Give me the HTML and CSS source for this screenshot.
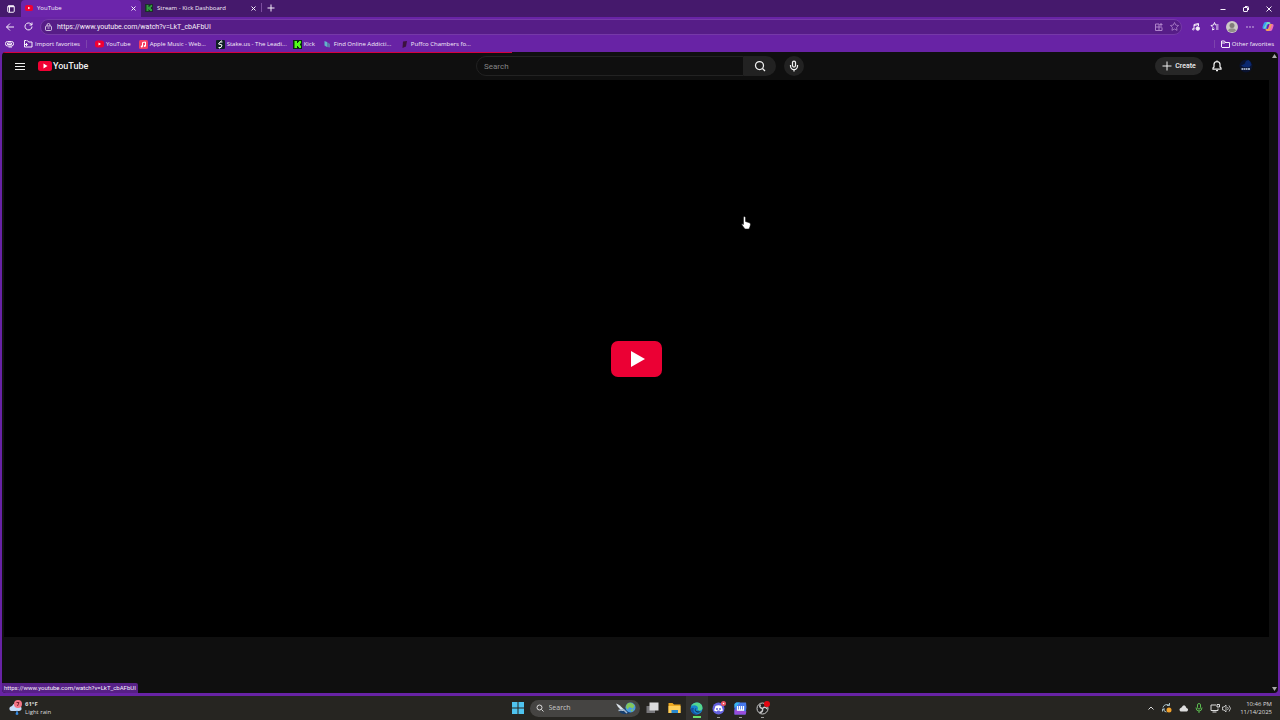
FILE: index.html
```html
<!DOCTYPE html>
<html lang="en">
<head>
  <meta charset="UTF-8">
  <meta name="viewport" content="width=device-width, initial-scale=1.0">
  <title>YouTube</title>
  <link rel="stylesheet" href="styles.css">
</head>
<body>
  <div class="browser">
    <div class="tab-strip">
      <button class="tab-menu" aria-label="Tab actions">
        <svg width="8" height="8" viewBox="0 0 16 16" fill="none" stroke="currentColor" stroke-width="2"><rect x="1.5" y="1.5" width="13" height="13" rx="2"/><path d="M2 3h12" stroke-width="3"/><path d="M5 4v10"/></svg>
      </button>
      <div class="tab active">
        <svg width="8" height="8" viewBox="0 0 18 16"><rect x="0" y="1" width="18" height="14" rx="5" fill="#f00033"/><path d="M7 5l5 3-5 3z" fill="#fff"/></svg>
        <span>YouTube</span>
        <button aria-label="Close tab"><svg width="5" height="5" viewBox="0 0 10 10" stroke="currentColor" stroke-width="2"><path d="M1 1l8 8M9 1l-8 8"/></svg></button>
      </div>
      <div class="tab">
        <svg width="8" height="8" viewBox="0 0 16 16"><rect width="16" height="16" fill="#1e2f2c"/><path d="M3 2h4v4h2V4h2V2h3v4h-2v4h2v4h-4v-2H8v-2H7v4H3z" fill="#2f9d3c"/></svg>
        <span>Stream - Kick Dashboard</span>
        <button aria-label="Close tab"><svg width="5" height="5" viewBox="0 0 10 10" stroke="currentColor" stroke-width="2"><path d="M1 1l8 8M9 1l-8 8"/></svg></button>
      </div>
      <button class="new-tab" aria-label="New tab"><svg width="8" height="8" viewBox="0 0 16 16" stroke="currentColor" stroke-width="2"><path d="M8 1v14M1 8h14"/></svg></button>
      <div class="window-controls">
        <button aria-label="Minimize"><svg width="6" height="6" viewBox="0 0 12 12" stroke="currentColor" stroke-width="2"><path d="M1 7h10"/></svg></button>
        <button aria-label="Restore"><svg width="6" height="6" viewBox="0 0 12 12" fill="none" stroke="currentColor" stroke-width="2"><rect x="1" y="3" width="8" height="8" rx="1"/><path d="M4 1h5q2 0 2 2v5"/></svg></button>
        <button aria-label="Close"><svg width="6" height="6" viewBox="0 0 12 12" stroke="currentColor" stroke-width="2"><path d="M1 1l10 10M11 1L1 11"/></svg></button>
      </div>
    </div>

    <div class="toolbar">
      <button aria-label="Back"><svg width="8" height="8" viewBox="0 0 16 16" fill="none" stroke="currentColor" stroke-width="2"><path d="M16 8H1M8 1L1 8l7 7"/></svg></button>
      <button aria-label="Refresh"><svg width="9" height="9" viewBox="0 0 18 18" fill="none" stroke="currentColor" stroke-width="2"><path d="M16 9a7 7 0 1 1-2-5l2 2M16 1v5h-5"/></svg></button>
      <div class="address">
        <svg width="7" height="8" viewBox="0 0 14 16" fill="none" stroke="currentColor" stroke-width="1.5"><rect x="1" y="6" width="12" height="9" rx="2"/><path d="M4 6V4a3 3 0 0 1 6 0v2M5 10h4"/></svg>
        <input type="text" aria-label="Address" value="https://www.youtube.com/watch?v=LkT_cbAFbUI">
        <button aria-label="Apps"><svg width="8" height="8" viewBox="0 0 16 16" fill="none" stroke="currentColor" stroke-width="2"><path d="M8 2H1v13h13V9M1 8h13M8 2v13M12 0v6M9 3h6"/></svg></button>
        <button aria-label="Add to favorites"><svg width="9" height="9" viewBox="0 0 18 18" fill="none" stroke="currentColor" stroke-width="1.6"><path d="M9 1l2.5 5.2 5.7.8-4.1 4 1 5.7L9 14l-5.1 2.7 1-5.7-4.1-4 5.7-.8z"/></svg></button>
      </div>
      <button aria-label="Media"><svg width="8" height="8" viewBox="0 0 16 16" fill="none" stroke="currentColor" stroke-width="2"><path d="M4 12V3l9-2v5M4 5l9-2"/><circle cx="2.5" cy="12.5" r="1.5"/><circle cx="11.5" cy="11" r="3.5" fill="currentColor"/></svg></button>
      <button aria-label="Favorites"><svg width="9" height="9" viewBox="0 0 18 18" fill="none" stroke="currentColor" stroke-width="2"><path d="M9 14l-4 2 1-5-4-4 5-1 2-5 2 5h6M12 10h5M12 14h5"/></svg></button>
      <button aria-label="Profile"><svg width="12" height="12" viewBox="0 0 24 24"><circle cx="12" cy="12" r="12" fill="#ccc9c6"/><circle cx="12" cy="9" r="5" fill="#817d7a"/><path d="M4 19c2-6 14-6 16 0-4 4-12 4-16 0z" fill="#918e89"/></svg></button>
      <button aria-label="More"><svg width="8" height="4" viewBox="0 0 16 8" fill="currentColor"><circle cx="2" cy="4" r="1.3"/><circle cx="8" cy="4" r="1.3"/><circle cx="14" cy="4" r="1.3"/></svg></button>
      <button aria-label="Copilot"><svg width="12" height="11" viewBox="0 0 24 22"><path d="M7 2h7l-5 14H4q-4 0-3-4l2-6q1-4 4-4z" fill="#3b9df2"/><path d="M10 2h4q3 0 3 4h-7l-3 9H3z" fill="#77d6bf"/><path d="M15 6h5q4 0 3 4l-2 6q-1 4-4 4h-7z" fill="#ed6cba"/><path d="M7 16h6l4-10h3l-4 11q-1 3-4 3h-2q-3 0-3-4z" fill="#f4a452"/><path d="M11 8h3l-2 6H9z" fill="#6823a5"/></svg></button>
    </div>

    <nav class="bookmarks">
      <button class="bookmark-home" aria-label="Work mode"><svg width="9" height="8" viewBox="0 0 18 16" fill="none" stroke="currentColor" stroke-width="2"><rect x="1" y="3" width="16" height="9" rx="4"/><path d="M5 6h8v3H5zM7 14h7"/></svg></button>
      <a class="import" href="#"><svg width="9" height="8" viewBox="0 0 18 16" fill="none" stroke="currentColor" stroke-width="2"><path d="M5 1H1v13h15V4H9L7 1M1 9h5M4 6l3 3-3 3"/></svg>Import favorites</a>
      <a href="#"><svg width="9" height="8" viewBox="0 0 18 16"><rect x="0" y="1" width="18" height="14" rx="5" fill="#f00033"/><path d="M7 5l5 3-5 3z" fill="#fff"/></svg>YouTube</a>
      <a class="wide" href="#"><svg width="9" height="9" viewBox="0 0 18 18"><rect width="18" height="18" rx="3" fill="#f53d60"/><path d="M7 13V5l6-1v8" fill="none" stroke="#fff" stroke-width="2"/><circle cx="5.500" cy="13" r="2" fill="#fff"/><circle cx="11.500" cy="12" r="2" fill="#fff"/></svg>Apple Music - Web...</a>
      <a class="wide" href="#"><svg width="9" height="9" viewBox="0 0 18 18"><rect width="18" height="18" rx="2" fill="#102026"/><path d="M13 4H8L5 8l7 2-2 5H5M11 1L9 4M8 15l-1 2" fill="none" stroke="#fff" stroke-width="2"/></svg>Stake.us - The Leadi...</a>
      <a href="#"><svg width="9" height="9" viewBox="0 0 18 18"><rect width="18" height="18" fill="#092c10"/><path d="M3 2h5v4h2V4h2V2h4v5h-2v4h2v5h-4v-2h-2v-2H8v4H3z" fill="#53fc18"/></svg>Kick</a>
      <a class="wide" href="#"><svg width="9" height="9" viewBox="0 0 18 18"><path d="M3 2l5 2v10L3 11z" fill="#60b5cc"/><path d="M8 4l6 4v7l-6-1z" fill="#5f79ad"/></svg>Find Online Addicti...</a>
      <a class="wide" href="#"><svg width="9" height="9" viewBox="0 0 18 18"><path d="M6 3l8-1-2 11-7 3z" fill="#3b123e"/></svg>Puffco Chambers fo...</a>
      <a class="other" href="#"><svg width="9" height="8" viewBox="0 0 18 16" fill="none" stroke="currentColor" stroke-width="2"><path d="M1 14V2h6l2 3h8v10H2zM1 6h7l2-2"/></svg>Other favorites</a>
    </nav>

    <div class="viewport">
      <div class="loading-bar"></div>
      <div class="page">
        <header class="masthead">
          <div class="start">
            <button class="menu" aria-label="Guide"><svg width="10" height="8" viewBox="0 0 20 16" stroke="currentColor" stroke-width="2"><path d="M0 3h20M0 9h20M0 15h20"/></svg></button>
            <a class="logo" href="#"><svg width="14" height="10" viewBox="0 0 28 20"><rect width="28" height="20" rx="5" fill="#f00033"/><path d="M11 5l8 5-8 5z" fill="#fff"/></svg>YouTube</a>
          </div>
          <form class="search">
            <input type="text" placeholder="Search" aria-label="Search">
            <button class="search-button" type="button" aria-label="Search"><svg width="12" height="12" viewBox="0 0 24 24" fill="none" stroke="currentColor" stroke-width="2.5"><circle cx="11" cy="11" r="8"/><path d="M17 17l5 5"/></svg></button>
            <button class="mic" type="button" aria-label="Search with your voice"><svg width="12" height="12" viewBox="0 0 24 24" fill="none" stroke="currentColor" stroke-width="2.5"><rect x="9" y="2" width="6" height="12" rx="3"/><path d="M5 10v2a7 7 0 0 0 14 0v-2M12 19v4"/></svg></button>
          </form>
          <div class="end">
            <button class="create"><svg width="10" height="10" viewBox="0 0 20 20" stroke="currentColor" stroke-width="2"><path d="M10 1v18M1 10h18"/></svg>Create</button>
            <button class="bell" aria-label="Notifications"><svg width="12" height="12" viewBox="0 0 24 24" fill="none" stroke="currentColor" stroke-width="2.5"><path d="M4 18v-2l2-2V9c0-8 12-8 12 0v5l2 2v2zM12 1v2M10 21h4"/></svg></button>
            <button class="avatar" aria-label="Account"><svg width="14" height="14" viewBox="0 0 28 28"><circle cx="14" cy="14" r="13" fill="#0a1330"/><path d="M14 4l5-2 4 4 2 6-5 5-11-1-5-3 7-3z" fill="#0b2870"/><path d="M5 20h3m1 0h3m1 0h3m1 0h5" stroke="#c9d7ed" stroke-width="3"/></svg></button>
          </div>
        </header>
        <main class="player">
          <button class="play" aria-label="Play"><svg width="14" height="16" viewBox="0 0 14 16"><path d="M0 0l14 8-14 8z" fill="#fff"/></svg></button>
          <svg class="pointer" width="10" height="14" viewBox="0 0 20 28"><path d="M5 2q2-2 4 1v8l9 3q2 2 0 7l-2 5H8l-6-8q-2-4 3-1z" fill="#fff" stroke="#111"/></svg>
        </main>
        <div class="below"></div>
      </div>
      <div class="scrollbar">
        <svg width="5" height="4" viewBox="0 0 10 8" fill="currentColor"><path d="M5 0l5 8H0z"/></svg>
        <svg width="5" height="4" viewBox="0 0 10 8" fill="currentColor"><path d="M0 0h10L5 8z"/></svg>
      </div>
      <div class="link-status">https://www.youtube.com/watch?v=LkT_cbAFbUI</div>
    </div>
  </div>

  <footer class="taskbar">
    <button class="weather">
      <svg width="15" height="16" viewBox="0 0 30 32"><path d="M4 21q-4-7 4-9 6-9 13-1 7 1 6 8-2 3-6 3H7z" fill="#c6dcfa"/><path d="M18 20l3 8q-3 4-6 0z" fill="#348be4"/><circle cx="20" cy="8" r="8" fill="#f57586"/><path d="M17 5h5l-3 7" fill="none" stroke="#7c2432" stroke-width="2"/></svg>
      <span><b>61°F</b><br>Light rain</span>
    </button>
    <div class="apps">
      <button aria-label="Start"><svg width="12" height="12" viewBox="0 0 24 24" fill="#4fc3ee"><path d="M0 0h11v11H0zM13 0h11v11H13zM0 13h11v11H0zM13 13h11v11H13z"/></svg></button>
      <label class="task-search">
        <svg width="8" height="8" viewBox="0 0 16 16" fill="none" stroke="currentColor" stroke-width="2"><circle cx="7" cy="7" r="5"/><path d="M11 11l4 4"/></svg>
        <input type="text" placeholder="Search" aria-label="Search">
        <svg width="22" height="14" viewBox="0 0 44 28"><path d="M9 18q10-5 17-1l10 1q-4 9-18 8Q8 25 9 18z" fill="#173e6d"/><path d="M2 5q7 1 17 14l-5 1Q5 13 2 5z" fill="#dce4ea"/><path d="M7 19l10-2 7 7" fill="none" stroke="#a4b7cc" stroke-width="3"/><circle cx="31" cy="13" r="10" fill="#4a9be1"/><path d="M24 6q8-6 15 3l-3 6-7-3-4 5-3-5zM31 18l6-2-3 6z" fill="#83c65b"/></svg>
      </label>
      <button aria-label="Task view"><svg width="13" height="12" viewBox="0 0 26 24"><path d="M1 8h17v14H1z" fill="#77777a"/><path d="M7 1h18v16H7z" fill="#dcdcdc"/></svg></button>
      <button aria-label="File Explorer"><svg width="13" height="12" viewBox="0 0 26 24"><path d="M1 2h8l3 3h13v17H1z" fill="#eca821"/><path d="M1 8h24v14H1z" fill="#ffd05b"/><path d="M7 16h13v6H7z" fill="#2989ce"/></svg></button>
      <button class="running current" aria-label="Edge"><svg width="13" height="13" viewBox="0 0 26 26"><circle cx="13" cy="13" r="12" fill="#1686d1"/><path d="M2 9C7-3 25-1 25 12c0 6-9 7-10 3 4-6-6-12-13-6z" fill="#54d78e"/><path d="M8 12q-4 10 8 12-9 4-14-6-2-9 6-6z" fill="#1552a4"/><path d="M13 12q-7 7 9 7-7 5-12-1-2-5 3-6z" fill="#173a5c"/></svg></button>
      <button class="running" aria-label="Discord"><svg width="14" height="14" viewBox="0 0 28 28"><circle cx="13" cy="15" r="12" fill="#6361de"/><path d="M7 10q6-3 12 0l3 9-5 2-2-2h-4l-2 2-5-2z" fill="#fff"/><circle cx="10" cy="16" r="2" fill="#6361de"/><circle cx="16" cy="16" r="2" fill="#6361de"/><circle cx="23" cy="5" r="5" fill="#ec5361"/><circle cx="23" cy="5" r="1.500" fill="#fff"/></svg></button>
      <button class="running" aria-label="Wave Link"><svg width="13" height="13" viewBox="0 0 26 26"><path d="M4 1h20l1 9-2 15H1V4z" fill="#4578ec"/><path d="M1 15l24 4-2 6H1z" fill="#994cdb"/><path d="M1 4l4-3h7L1 12z" fill="#38b9ed"/><path d="M7 8v8h12V8M11 8v8M15 8v8" stroke="#fff" stroke-width="2.500" fill="none"/></svg></button>
      <button class="running" aria-label="OBS"><svg width="14" height="14" viewBox="0 0 28 28"><circle cx="13" cy="15" r="11" fill="#222" stroke="#ccc" stroke-width="2"/><path d="M13 15Q5 13 9 7M13 15q1 8-6 8M13 15q6-5 9 1" fill="none" stroke="#ccc" stroke-width="3"/><circle cx="22" cy="6" r="6" fill="#e40712"/></svg></button>
    </div>
    <div class="tray">
      <button aria-label="Hidden icons"><svg width="6" height="4" viewBox="0 0 12 8" fill="none" stroke="currentColor" stroke-width="2"><path d="M1 7l5-5 5 5"/></svg></button>
      <button aria-label="Update"><svg width="10" height="10" viewBox="0 0 20 20" fill="none" stroke="#a7bdc4" stroke-width="2"><path d="M2 9q2-8 13-5M15 0v5h-5M3 12q1 6 6 6M1 17v-5h5"/><circle cx="14" cy="14" r="5" fill="#f3a32c" stroke="none"/></svg></button>
      <button aria-label="OneDrive"><svg width="9" height="7" viewBox="0 0 18 14"><path d="M3 13q-5-5 2-8 6-9 10 1 6 3 1 7z" fill="#ddd"/></svg></button>
      <button class="mic-use" aria-label="Microphone"><svg width="8" height="10" viewBox="0 0 16 20" fill="none" stroke="currentColor" stroke-width="2"><rect x="5" y="1" width="6" height="11" rx="3"/><path d="M2 9q0 7 6 7t6-7M8 16v4"/></svg></button>
      <button class="network" aria-label="Network and volume"><svg width="10" height="9" viewBox="0 0 20 18" fill="none" stroke="currentColor" stroke-width="2"><path d="M12 2H2v11h14V9M5 16h8M14 1h5v5h-5z"/></svg><svg width="9" height="9" viewBox="0 0 18 18" fill="none" stroke="currentColor" stroke-width="1.600"><path d="M1 6h3l4-4v14l-4-4H1zM11 6q3 3 0 6M14 3q6 6 0 12"/></svg></button>
      <button class="clock">10:46 PM<br>11/14/2025</button>
    </div>
  </footer>
</body>
</html>
```
FILE: styles.css
```css
* {
  box-sizing: border-box;
}
body {
  margin: 0;
  height: 100vh;
  display: flex;
  flex-direction: column;
  overflow: hidden;
  background: #6823a5;
  color: #f6f0fa;
  font-family: "Open Sans", "Noto Sans", sans-serif;
  font-size: 6px;
  line-height: 8px;
}
button, input {
  font: inherit;
  color: inherit;
  background: none;
  border: 0;
  padding: 0;
  margin: 0;
  min-width: 0;
  outline: 0;
}
button {
  display: flex;
  align-items: center;
  justify-content: center;
}
a {
  color: inherit;
  text-decoration: none;
}
svg {
  flex: none;
}
.browser {
  flex: 1;
  min-height: 0;
  display: flex;
  flex-direction: column;
}

/* tabs */
.tab-strip {
  display: flex;
  height: 17px;
  background: #45196c;
}
.tab-menu {
  width: 21px;
}
.tab {
  width: 120px;
  display: flex;
  align-items: center;
  gap: 4px;
  padding: 0 5px 1px 4px;
}
.tab span {
  flex: 1;
}
.tab.active {
  background: #6c25ab;
  border-radius: 4px 4px 0 0;
}
.new-tab {
  width: 19px;
  height: 9px;
  margin-top: 3px;
  border-left: 1px solid #7c4d9f;
}
.window-controls {
  margin-left: auto;
  display: flex;
}
.window-controls button {
  width: 23px;
}

/* address bar */
.toolbar {
  display: flex;
  align-items: center;
  height: 19px;
  padding: 0 3px 0 1px;
}
.toolbar button {
  width: 18px;
}
.address {
  flex: 1;
  height: 16px;
  margin: 0 5px 0 3px;
  padding: 0 1px 0 4px;
  display: flex;
  align-items: center;
  gap: 5px;
  background: #561d87;
  border: 1px solid #7539a7;
  border-radius: 8px;
}
.address input {
  flex: 1;
  font-family: Roboto, sans-serif;
  font-size: 7px;
}
.address button {
  width: 11px;
  color: #ae83ca;
}

/* favorites */
.bookmarks {
  display: flex;
  align-items: center;
  gap: 8px;
  height: 16px;
  padding: 0 6px 0 3px;
}
.bookmarks a {
  display: flex;
  align-items: center;
  gap: 2px;
  white-space: nowrap;
}
.bookmark-home {
  width: 12px;
}
.bookmarks .import {
  padding-right: 6px;
  margin-left: 1px;
  border-right: 1px solid #7d43ad;
}
.bookmarks .wide {
  width: 69px;
}
.bookmarks .other {
  margin-left: auto;
  padding-left: 6px;
  border-left: 1px solid #7d43ad;
}

/* web page */
.viewport {
  flex: 1;
  min-height: 0;
  margin: 0 2px 3px;
  display: flex;
  position: relative;
  background: #0f0f0f;
  border-radius: 4px;
  overflow: hidden;
  font-family: Roboto, sans-serif;
}
.loading-bar {
  position: absolute;
  top: 0;
  left: 0;
  width: 40%;
  height: 1px;
  background: #d5003e;
}
.page {
  flex: 1;
  display: flex;
  flex-direction: column;
}
.masthead {
  display: grid;
  grid-template-columns: 1fr auto 1fr;
  align-items: center;
  height: 28px;
  padding: 0 6px 0 13px;
  color: #f1f1f1;
}
.start, .end, .search {
  display: flex;
  align-items: center;
}
.start {
  gap: 13px;
}
.logo {
  display: flex;
  align-items: center;
  gap: 1px;
  font-size: 9px;
  line-height: 12px;
  font-weight: 500;
}
.search input {
  width: 268px;
  height: 20px;
  padding: 0 7px;
  border: 1px solid #222;
  border-radius: 10px 0 0 10px;
  font-size: 8px;
}
.search input::placeholder {
  color: #858585;
}
.search-button {
  width: 32px;
  height: 20px;
  background: #222;
  border-radius: 0 10px 10px 0;
}
.mic {
  width: 20px;
  height: 20px;
  margin-left: 8px;
  background: #222;
  border-radius: 50%;
}
.end {
  justify-content: flex-end;
  padding-right: 12px;
}
.create {
  gap: 3px;
  width: 48px;
  height: 18px;
  border-radius: 9px;
  background: #272727;
  font-size: 7px;
  font-weight: 500;
}
.bell {
  margin: 0 16px 0 8px;
}
.player {
  flex: 1;
  display: flex;
  align-items: center;
  justify-content: center;
  position: relative;
  margin: 0 2px;
  background: #000;
}
.play {
  width: 51px;
  height: 36px;
  background: #eb0034;
  border-radius: 7px;
  padding-left: 2px;
}
.pointer {
  position: absolute;
  left: 58.3%;
  top: 24.5%;
}
.below {
  height: 56px;
}
.scrollbar {
  width: 7px;
  display: flex;
  flex-direction: column;
  align-items: center;
  justify-content: space-between;
  padding: 2px 0;
  color: #aaa;
}
.link-status {
  position: absolute;
  left: 0;
  bottom: 0;
  height: 10px;
  padding: 0 2px;
  background: #562086;
  border-radius: 0 2px 0 0;
  line-height: 10px;
}

/* taskbar */
.taskbar {
  display: grid;
  grid-template-columns: 1fr auto 1fr;
  height: 24px;
  padding: 0 8px;
  background: #262521;
  color: #ddd;
}
.weather {
  justify-self: start;
  gap: 2px;
  text-align: left;
}
.apps, .tray {
  display: flex;
  align-items: center;
}
.apps button {
  width: 22px;
  height: 24px;
  position: relative;
}
.task-search {
  display: flex;
  align-items: center;
  gap: 5px;
  width: 110px;
  height: 17px;
  margin: 0 2px 0 1px;
  padding: 0 3px 0 6px;
  background: #454442;
  border-radius: 9px;
}
.task-search input {
  flex: 1;
  font-size: 7px;
}
.task-search input::placeholder {
  color: #c8c8c8;
}
.apps .current {
  background: #333230;
}
.running::after {
  content: "";
  position: absolute;
  bottom: 2px;
  width: 3px;
  height: 1px;
  background: #999;
}
.current::after {
  width: 8px;
  height: 2px;
  background: #6bdf69;
}
.tray {
  justify-content: flex-end;
}
.tray button {
  width: 16px;
}
.tray .mic-use {
  color: #5cbd50;
}
.tray .network {
  width: 26px;
  gap: 2px;
}
.tray .clock {
  width: auto;
  min-width: 39px;
  display: block;
  text-align: right;
}
```
